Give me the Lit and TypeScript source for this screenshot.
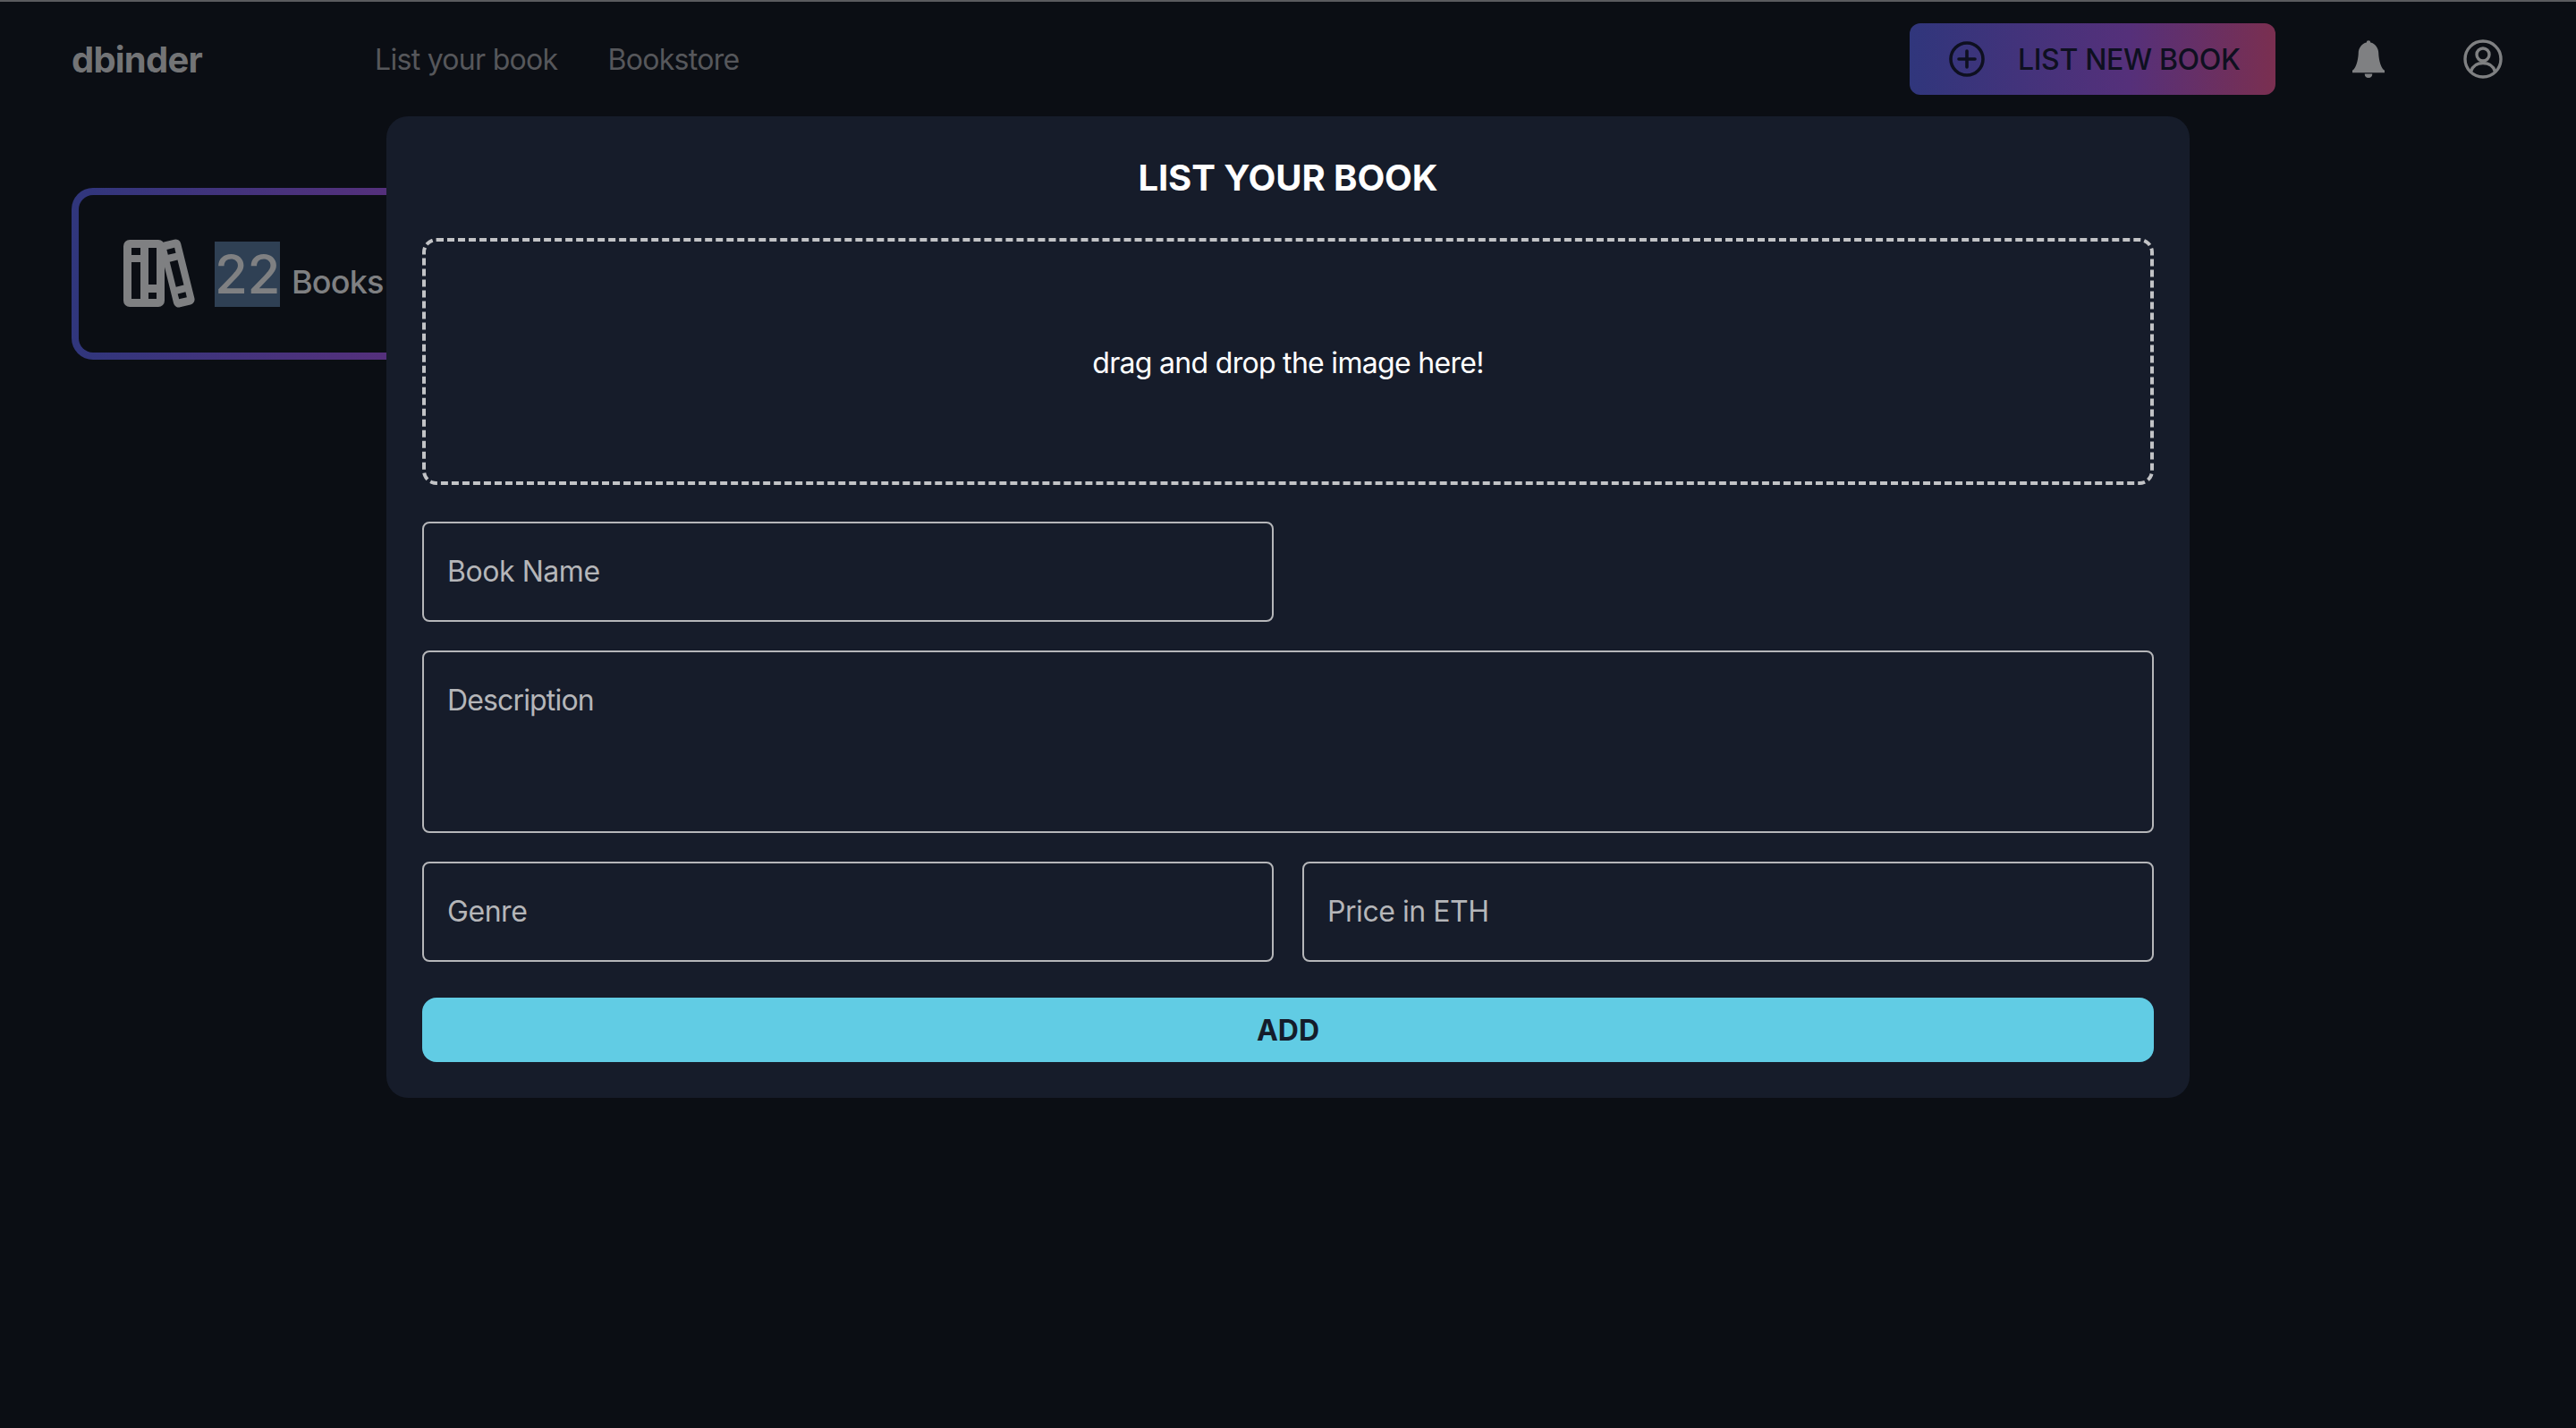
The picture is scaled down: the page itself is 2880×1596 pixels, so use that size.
import { LitElement, html, css } from "lit";
import { customElement } from "lit/decorators.js";

@customElement("app-root")
export class AppRoot extends LitElement {
  static styles = css`
    :host { display: block; }
    * { box-sizing: border-box; }
    .page {
      position: relative; width: 2880px; height: 1596px; background: #0b0e14;
      border-top: 2px solid #5a5b5e; font-family: Inter, "Liberation Sans", sans-serif; overflow: hidden;
    }
    .nav { display: flex; align-items: center; height: 80px; margin-top: 24px; padding: 0 82px 0 80px; }
    .logo { width: 339px; font-size: 40px; font-weight: 700; color: #737476; letter-spacing: -0.8px; }
    .links { display: flex; gap: 56px; font-size: 32px; color: #56575b; letter-spacing: -0.7px; }
    .right { margin-left: auto; display: flex; align-items: center; }
    .cta {
      display: flex; align-items: center; gap: 37px; width: 409px; height: 80px; padding-left: 44px; border-radius: 12px;
      background: linear-gradient(90deg, #30367c, #55307a 60%, #7a2f50);
      color: #0e1020; font-size: 32px; font-weight: 500; letter-spacing: -0.35px;
    }
    .cta svg { width: 40px; height: 40px; flex: none; }
    .bell { width: 36px; height: 42px; margin-left: 86px; display: block; }
    .user { width: 44px; height: 44px; margin-left: 88px; display: block; }
    .stat {
      width: 600px; height: 192px; margin: 104px 0 0 80px; padding: 49px 0 0 50px;
      display: flex; align-items: flex-start; border-radius: 24px;
      border: 8px solid transparent;
      background: linear-gradient(#0b0e14, #0b0e14) padding-box, linear-gradient(90deg, #30367c, #5c2f7c 70%, #7a2f50) border-box;
    }
    .stat svg { width: 80px; height: 77px; flex: none; display: block; }
    .count { margin-left: 22px; margin-top: 3px; font-size: 60px; line-height: 73px; font-weight: 500; letter-spacing: -0.5px; color: #7f8082; background: #2f4054; }
    .unit { margin-left: 13px; margin-top: 26px; font-size: 36px; line-height: 44px; font-weight: 500; color: #7f8082; letter-spacing: -0.8px; }
    .modal {
      position: absolute; left: 432px; top: 128px; width: 2016px; height: 1097px; padding: 40px;
      background: #161c2a; border-radius: 24px; display: flex; flex-direction: column; color: #fff;
    }
    .title { margin: 0; height: 56px; line-height: 57px; text-align: center; font-size: 40px; font-weight: 700; letter-spacing: -0.1px; }
    .drop {
      margin-top: 40px; height: 276px; padding-top: 2px; border: 4px dashed #c2c3c6; border-radius: 16px;
      display: flex; align-items: center; justify-content: center; font-size: 32px; letter-spacing: -0.7px;
    }
    .row { display: flex; gap: 32px; margin-top: 32px; }
    .row.first { margin-top: 41px; }
    .field {
      flex: 0 0 952px; height: 112px; padding: 0 26px 2px; display: flex; align-items: center;
      border: 2px solid #b5b6b9; border-radius: 8px; color: #b5b6b9; font-size: 32px; letter-spacing: -0.45px;
    }
    .area { flex: 1; height: 204px; align-items: flex-start; padding-top: 34px; line-height: 40px; letter-spacing: -0.85px; }
    .add {
      margin-top: 40px; height: 72px; border-radius: 16px; background: #61cce4; color: #151c2b;
      display: flex; align-items: center; justify-content: center; font-size: 32px; font-weight: 700;
    }
  `;

  render() {
    return html`
      <div class="page">
        <header class="nav">
          <div class="logo">dbinder</div>
          <nav class="links"><span>List your book</span><span>Bookstore</span></nav>
          <div class="right">
            <div class="cta">
              <svg viewBox="0 0 40 40" fill="none" stroke="#0e1020" stroke-width="3.6"><circle cx="20" cy="20" r="18"/><path d="M20 11v18M11 20h18" stroke-linecap="round"/></svg>
              <span>LIST NEW BOOK</span>
            </div>
            <svg class="bell" viewBox="0 0 16 18.6" preserveAspectRatio="none" fill="#7f8082"><path d="M8 18.6a2 2 0 0 0 1.9-2H6.1a2 2 0 0 0 1.9 2zm1-17.5a1 1 0 1 0-2 0C4.7 1.6 3 3.8 3 6.4c0 1.3-.6 7-3 8.6v1h16v-1c-2.400-1.600-3-7.300-3-8.600 0-2.600-1.700-4.800-4-5.300z"/></svg>
            <svg class="user" viewBox="0 0 44 44" fill="none" stroke="#7f8082" stroke-width="3.400"><circle cx="22" cy="22" r="20"/><circle cx="22" cy="17" r="7"/><path d="M8.500 36c2-6.500 7-9.500 13.500-9.500S33.500 29.500 35.500 36"/></svg>
          </div>
        </header>
        <section class="stat">
          <svg viewBox="0 0 80 77">
            <g fill="#7f8082">
              <rect x="0" y="1" width="46" height="75" rx="7"/>
              <rect x="48" y="1" width="24" height="75" rx="6" transform="rotate(-14 60 38)"/>
            </g>
            <g fill="#0b0e14">
              <rect x="9" y="10" width="10" height="8"/><rect x="9" y="26" width="10" height="41"/>
              <rect x="28" y="10" width="9" height="41"/><rect x="28" y="60" width="9" height="7"/>
              <g transform="rotate(-14 60 38)">
                <rect x="55" y="10" width="9" height="6"/><rect x="55" y="24" width="9" height="29"/><rect x="55" y="61" width="9" height="6"/>
              </g>
            </g>
          </svg>
          <span class="count">22</span>
          <span class="unit">Books</span>
        </section>
        <div class="modal">
          <h2 class="title">LIST YOUR BOOK</h2>
          <div class="drop">drag and drop the image here!</div>
          <div class="row first"><div class="field">Book Name</div></div>
          <div class="row"><div class="field area">Description</div></div>
          <div class="row"><div class="field">Genre</div><div class="field">Price in ETH</div></div>
          <div class="add">ADD</div>
        </div>
      </div>
    `;
  }
}
